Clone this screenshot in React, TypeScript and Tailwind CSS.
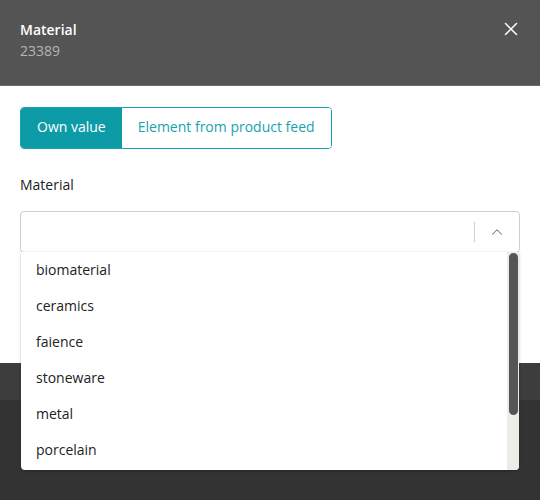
import { X, ChevronUp } from 'lucide-react';

const options = ['biomaterial', 'ceramics', 'faience', 'stoneware', 'metal', 'porcelain'];

export default function App() {
  return (
    <div className="relative w-[540px] h-[500px] overflow-hidden bg-[#333333] font-['Open_Sans',sans-serif] text-[14px]">
      {/* header */}
      <div className="flex items-start justify-between h-[86px] bg-[#545454] border-b border-[#6a6a6a] px-5 pt-[19px]">
        <div className="flex flex-col">
          <span className="text-white font-semibold leading-[22px]">Material</span>
          <span className="text-[#b5b5b5] leading-[20px]">23389</span>
        </div>
        <X className="h-[22px] w-[22px] text-white mt-[-1px] -mr-[2px]" strokeWidth={1.6} />
      </div>

      {/* body */}
      <div className="bg-white h-[277px] px-5 pt-[21px]">
        <div className="inline-flex h-[42px] rounded border border-[#17a2ae] overflow-hidden">
          <button className="px-4 pb-[3px] bg-[#0e9ba8] text-white">Own value</button>
          <button className="px-[16px] pb-[3px] bg-white text-[#17a2ae]">Element from product feed</button>
        </div>
        <div className="mt-[26px] text-[#222] leading-[20px]">Material</div>
        <div className="mt-[16px] flex items-center h-[42px] rounded border border-[#cfcfcf] bg-white">
          <div className="flex-1" />
          <div className="w-px h-[20px] bg-[#cfcfcf]" />
          <ChevronUp className="h-[18px] w-[18px] text-[#777] mx-[13px]" strokeWidth={1.4} />
        </div>
      </div>

      {/* footer */}
      <div className="h-[37px] bg-[#3d3d3d]" />

      {/* dropdown menu */}
      <div className="absolute left-[21px] top-[252px] w-[498px] h-[218px] bg-white rounded-b shadow-[0_1px_3px_rgba(0,0,0,0.25)] overflow-hidden">
        <ul className="pr-[12px]">
          {options.map((o) => (
            <li key={o} className="h-[36px] flex items-center px-[15px] pb-[1px] text-[#222] text-[14px]">
              {o}
            </li>
          ))}
        </ul>
        <div className="absolute right-0 top-0 w-[12px] h-full bg-[#eeece8]">
          <div className="mx-auto mt-[1px] w-[9px] h-[162px] rounded-full bg-[#555555]" />
        </div>
      </div>
    </div>
  );
}
